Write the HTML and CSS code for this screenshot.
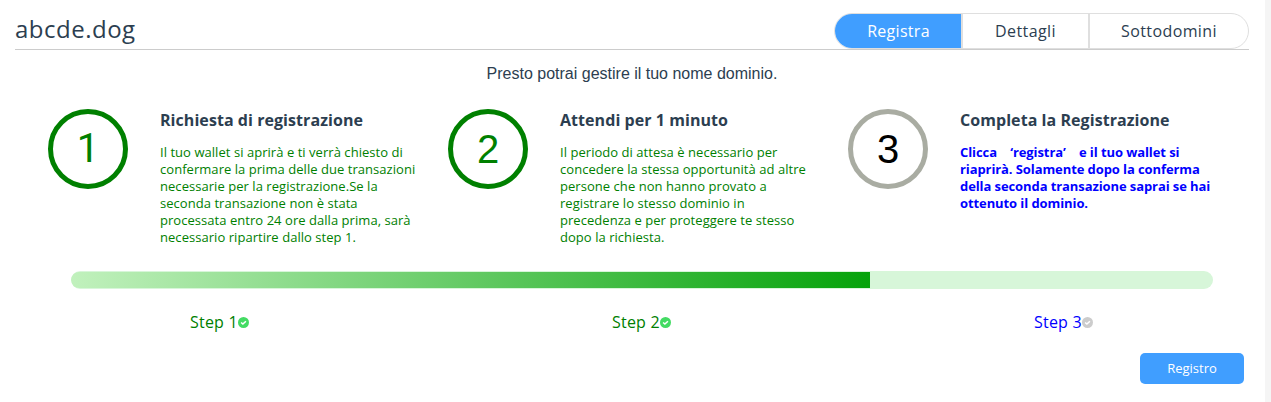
FILE: index.html
```html
<!DOCTYPE html>
<html lang="it">
<head>
<meta charset="utf-8">
<title>abcde.dog</title>
<link rel="stylesheet" href="styles.css">
</head>
<body>
<main class="panel">
  <header class="header">
    <h1 class="domain"><span>abcde.dog</span></h1>
    <nav class="tabs">
      <a class="tab tab-active"><span>Registra</span></a>
      <a class="tab"><span>Dettagli</span></a>
      <a class="tab tab-last"><span>Sottodomini</span></a>
    </nav>
  </header>
  <p class="intro"><span>Presto potrai gestire il tuo nome dominio.</span></p>
  <section class="steps">
    <article class="step done">
      <div class="circle circle-one">1</div>
      <div class="info">
        <h2 class="step-title">Richiesta di registrazione</h2>
        <p class="text">Il tuo wallet si aprirà e ti verrà chiesto di<br>confermare la prima delle due transazioni<br>necessarie per la registrazione.Se la<br>seconda transazione non è stata<br>processata entro 24 ore dalla prima, sarà<br>necessario ripartire dallo step 1.</p>
      </div>
    </article>
    <article class="step done">
      <div class="circle">2</div>
      <div class="info">
        <h2 class="step-title">Attendi per 1 minuto</h2>
        <p class="text">Il periodo di attesa è necessario per<br>concedere la stessa opportunità ad altre<br>persone che non hanno provato a<br>registrare lo stesso dominio in<br>precedenza e per proteggere te stesso<br>dopo la richiesta.</p>
      </div>
    </article>
    <article class="step current">
      <div class="circle">3</div>
      <div class="info">
        <h2 class="step-title">Completa la Registrazione</h2>
        <p class="text">Clicca <span class="quote-open">‘</span>registra<span class="quote-close">’</span> e il tuo wallet si<br>riaprirà. Solamente dopo la conferma<br>della seconda transazione saprai se hai<br>ottenuto il dominio.</p>
      </div>
    </article>
  </section>
  <div class="progress"><div class="bar"></div></div>
  <div class="labels">
    <div class="label done"><span>Step 1</span><svg class="check" viewBox="0 0 11 11"><circle cx="5.5" cy="5.5" r="5.5"/><path d="M3.1 5.5 4.9 7.1 7.9 4.2"/></svg></div>
    <div class="label done"><span>Step 2</span><svg class="check" viewBox="0 0 11 11"><circle cx="5.5" cy="5.5" r="5.5"/><path d="M3.1 5.5 4.9 7.1 7.9 4.2"/></svg></div>
    <div class="label current"><span>Step 3</span><svg class="check" viewBox="0 0 11 11"><circle cx="5.5" cy="5.5" r="5.5"/><path d="M3.1 5.5 4.9 7.1 7.9 4.2"/></svg></div>
  </div>
  <footer class="actions"><button class="button"><span>Registro</span></button></footer>
</main>
</body>
</html>
```
FILE: styles.css
```css
* { box-sizing: border-box; }
body {
  margin: 0;
  height: 402px;
  overflow: hidden;
  background: #f5f5f5;
  color: #2c3e50;
  font-family: "Open Sans", "Noto Sans", sans-serif;
}
h1, h2, p { margin: 0; font-weight: 400; }
.panel { width: 1265px; height: 402px; padding: 13px 16px 0 15px; background: #fff; }
.header { display: flex; justify-content: space-between; height: 37px; border-bottom: 1px solid #ccc; }
.domain { font-size: 24px; line-height: 32px; letter-spacing: .5px; white-space: nowrap; }
.tabs { display: flex; width: 415px; height: 36px; border: 1px solid #dfdfdf; border-radius: 18px; overflow: hidden; }
.tab { display: flex; justify-content: center; width: 127px; line-height: 34px; font-size: 16px; letter-spacing: .4px; border-right: 2px solid #dfdfdf; }
.tab-active { width: 128px; background: #409eff; color: #fff; letter-spacing: .3px; padding-left: 1px; }
.tab-last { width: 158px; border-right: 0; }
.intro { height: 59px; padding-top: 13px; text-align: center; font: 16px/21px "Liberation Sans", Arial, sans-serif; }
.steps { display: grid; grid-template-columns: repeat(3, 400px); padding-left: 33px; height: 162px; }
.step { display: flex; gap: 32px; }
.circle { flex: none; width: 80px; height: 80px; border: 5px solid; border-radius: 50%; text-align: center; font: 40px/70px "Liberation Sans", Arial, sans-serif; }
.circle-one { font-family: Roboto, sans-serif; }
.current .circle { color: #000; border-color: #a9aca2; }
.done { color: #008000; }
.current { color: #0000ff; }
.step-title { font-size: 16px; line-height: 22px; font-weight: 700; letter-spacing: .06px; color: #2c3e50; white-space: nowrap; }
.text { padding-top: 13px; font-size: 13px; line-height: 17px; letter-spacing: .045px; white-space: nowrap; }
.current .text { font-weight: 700; letter-spacing: -.09px; }
.quote-open { margin-left: 10px; }
.quote-close { margin-right: 10px; }
.progress { width: 1142px; height: 18px; margin-left: 56px; padding: 1px 0; background: #d7f6d9; border-radius: 9px; overflow: hidden; }
.bar { width: 799px; height: 16px; border-radius: 8px 0 0 8px; background: linear-gradient(90deg, #c1f1bd, #05a30a); }
.labels { display: grid; grid-template-columns: 422px 422px auto; padding: 21px 0 0 175px; }
.label { display: flex; align-items: center; height: 24px; font-size: 16px; line-height: 24px; letter-spacing: .2px; }
.check { width: 11px; height: 11px; fill: #43db63; }
.check path { fill: none; stroke: #fff; stroke-width: 1.5; }
.current .check { fill: #ccc; }
.actions { display: flex; justify-content: flex-end; padding: 19px 5px 0 0; }
.button { width: 104px; height: 31px; padding: 0; border: 0; border-radius: 5px; background: #409eff; color: #fff; font: 13px/29px "Open Sans", sans-serif; }
```
